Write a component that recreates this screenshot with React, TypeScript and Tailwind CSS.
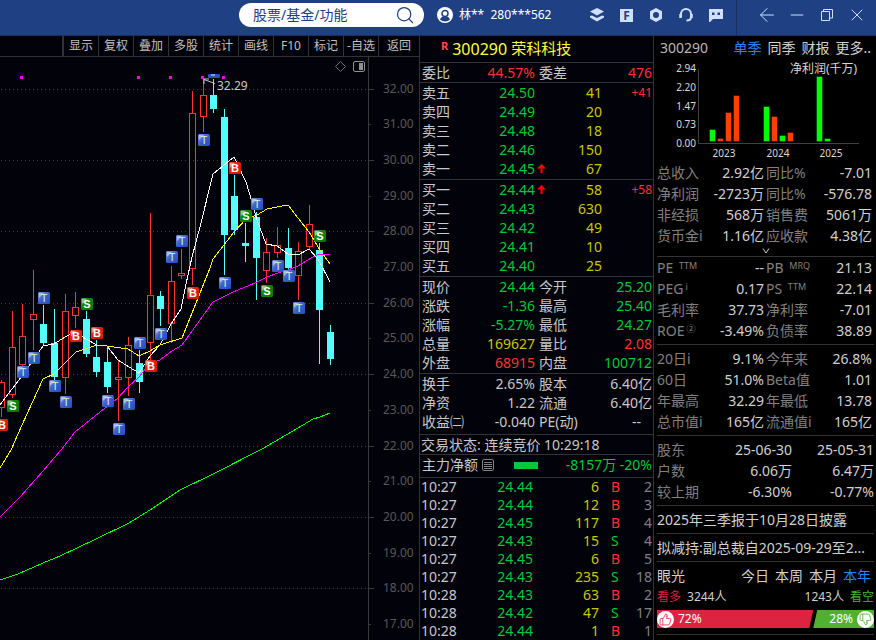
import type { ReactNode } from "react";
import { ArrowLeft, Minus, Search, ThumbsDown, ThumbsUp, X } from "lucide-react";
import clsx from "clsx";

const GREEN = "text-[#00c83c]";
const RED = "text-[#ff3232]";
const YELLOW = "text-[#c8c800]";
const PLAIN = "text-[#c8c8c8]";

// ── Candlestick data: x, high, open/close top, open/close bottom, low (chart units) ──
type Candle = [x: number, high: number, top: number, bottom: number, low: number, up: boolean];

const CANDLES: Candle[] = [
  [1, 380, 382, 407, 417, true],
  [12, 311, 347, 394, 398, true],
  [22, 304, 336, 364, 368, true],
  [33, 270, 314, 319, 350, true],
  [43, 305, 324, 343, 346, false],
  [54, 309, 343, 377, 380, false],
  [65, 294, 311, 377, 394, true],
  [75, 292, 307, 315, 328, true],
  [86, 311, 319, 354, 357, false],
  [96, 340, 357, 372, 377, false],
  [107, 347, 362, 387, 393, false],
  [118, 361, 377, 379, 421, true],
  [128, 337, 345, 377, 396, true],
  [139, 350, 363, 382, 393, false],
  [150, 213, 295, 342, 360, true],
  [160, 291, 296, 309, 326, false],
  [171, 266, 281, 323, 343, true],
  [181, 249, 273, 275, 279, true],
  [192, 91, 113, 268, 285, true],
  [203, 78, 95, 116, 132, true],
  [213, 79, 95, 109, 113, false],
  [224, 109, 117, 235, 275, false],
  [234, 175, 196, 230, 235, false],
  [245, 223, 243, 246, 262, false],
  [256, 212, 217, 258, 300, false],
  [266, 238, 252, 270, 283, true],
  [277, 227, 245, 252, 258, true],
  [288, 228, 248, 268, 270, false],
  [298, 242, 251, 275, 300, true],
  [309, 205, 224, 246, 250, true],
  [319, 243, 250, 310, 364, false],
  [330, 325, 332, 359, 365, false],
];

const AVERAGES = [
  {
    color: "#ffffff",
    points:
      "0,405 12,389 22,376 43,346 54,344 65,337 76,332 86,339 97,345 107,346 118,360 129,367 139,373 150,356 160,345 171,324 181,309 186,284 192,257 200,227 213,174 234,157 246,182 252,202 257,220 266,244 277,246 288,254 298,255 309,249 318,259 330,282",
  },
  {
    color: "#ffff00",
    points:
      "0,468 11,450 22,425 43,379 54,374 76,352 97,345 107,346 128,349 139,356 150,351 160,345 182,338 192,313 210,268 213,259 234,232 247,218 257,215 267,209 277,207 288,205 298,218 309,232 320,250 330,264",
  },
  {
    color: "#ff00ff",
    points:
      "0,517 20,497 43,471 61,450 75,432 100,412 118,398 128,387 139,377 150,363 160,360 172,351 182,345 210,306 213,302 233,292 255,283 267,277 278,273 288,270 298,266 313,257 317,255 330,254",
  },
  {
    color: "#00ff00",
    points: "0,580 18,574 43,563 60,556 96,539 129,523 150,510 180,490 213,474 262,449 298,428 313,419 320,417 330,413",
  },
];

const BADGES: [kind: "T" | "B" | "S", x: number, y: number][] = [
  ["T", 204, 140], ["T", 182, 241], ["T", 172, 257], ["T", 257, 204], ["T", 225, 283],
  ["T", 278, 266], ["T", 289, 276], ["T", 299, 308], ["T", 44, 298], ["T", 23, 372],
  ["T", 34, 358], ["T", 55, 386], ["T", 66, 402], ["T", 108, 401], ["T", 119, 429],
  ["T", 129, 404], ["T", 140, 343], ["T", 161, 334],
  ["B", 235, 168], ["B", 193, 293], ["B", 151, 366], ["B", 76, 336], ["B", 97, 333], ["B", 2, 425],
  ["S", 246, 216], ["S", 267, 291], ["S", 320, 236], ["S", 13, 406], ["S", 87, 304],
];

const PRICES = [32, 31, 30, 29, 28, 27, 26, 25, 24, 23, 22, 21, 20, 19, 18, 17];
const DOTS = [20, 137, 169, 201, 222];

const priceY = (price: number) => Math.floor(89 + (32 - price) * 35.7);

function Badge({ kind, x, y }: { kind: "T" | "B" | "S"; x: number; y: number }) {
  return (
    <g transform={`translate(${x - 6} ${y - 6})`}>
      <rect width="12" height="12" rx="1.5" fill={`url(#badge${kind})`} />
      <path d="M1 1h5L1 6z" fill="#ffffff" opacity="0.45" />
      <text
        x="6"
        y="10"
        textAnchor="middle"
        fontSize="11"
        fontWeight={kind === "T" ? 400 : 700}
        fontFamily="Liberation Sans, sans-serif"
        fill={kind === "T" ? "#d8f0d8" : "#ffffff"}
      >
        {kind}
      </text>
    </g>
  );
}

function CandleChart() {
  return (
    <svg viewBox="0 57 419 583" className="block w-full" role="img" aria-label="K线图">
      <defs>
        <linearGradient id="badgeT" x1="0" y1="0" x2="1" y2="1">
          <stop offset="0" stopColor="#7f9be0" />
          <stop offset="0.5" stopColor="#3a5fc8" />
          <stop offset="1" stopColor="#1e4fd0" />
        </linearGradient>
        <linearGradient id="badgeB" x1="0" y1="0" x2="1" y2="1">
          <stop offset="0" stopColor="#e86050" />
          <stop offset="0.4" stopColor="#e02010" />
          <stop offset="1" stopColor="#d81800" />
        </linearGradient>
        <linearGradient id="badgeS" x1="0" y1="0" x2="1" y2="1">
          <stop offset="0" stopColor="#60a860" />
          <stop offset="0.4" stopColor="#0c840c" />
          <stop offset="1" stopColor="#087808" />
        </linearGradient>
      </defs>

      {/* Grid and price axis */}
      {PRICES.map((price) => {
        const y = priceY(price);
        const major = price % 2 === 0;
        return (
          <g key={price}>
            {major && <path d={`M1 ${y + 0.5}H368`} stroke="#3c3c3c" strokeDasharray="1 3" />}
            <path d={`M368 ${y + 0.5}H${major ? 374 : 371}`} stroke="#3a3a3a" />
            <text x="383" y={y + 4} fontSize="12" fill="#585858">
              {price.toFixed(2)}
            </text>
          </g>
        );
      })}
      <path d="M368.5 57V640" stroke="#3a3a3a" />

      {/* Corner tools */}
      <path d="M340.5 61.5l5 5-5 5-5-5z" fill="none" stroke="#707070" />
      <rect x="353.5" y="61.5" width="11" height="10" rx="1.5" fill="none" stroke="#909090" />
      <rect x="359" y="63" width="4" height="7" fill="#909090" />

      {CANDLES.map(([x, high, top, bottom, low, up]) =>
        up ? (
          <g key={x} stroke="#ff3232" fill="none">
            <path d={`M${x + 0.5} ${high}V${top}M${x + 0.5} ${bottom + 1}V${low}`} />
            <rect x={x - 2.5} y={top + 0.5} width="6" height={bottom - top} />
          </g>
        ) : (
          <g key={x} fill="#54fcfc">
            <rect x={x} y={high} width="1" height={low - high} />
            <rect x={x - 3} y={top} width="7" height={bottom - top} />
          </g>
        ),
      )}

      {AVERAGES.map((line) => (
        <polyline key={line.color} points={line.points} fill="none" stroke={line.color} shapeRendering="crispEdges" />
      ))}

      {BADGES.map(([kind, x, y]) => (
        <Badge key={`${kind}${x}`} kind={kind} x={x} y={y} />
      ))}

      {DOTS.map((x) => (
        <rect key={x} x={x} y="76" width="3" height="3" fill="#ff00ff" />
      ))}

      {/* High mark */}
      <rect x="208" y="74" width="12" height="4" rx="1" fill="#2a55c0" />
      <path d="M211 74h4v2h-4z" fill="#7f9be0" />
      <path d="M215 83.5L204 79.5M204 84v-5h5" fill="none" stroke="#c8c8c8" />
      <text x="217" y="90" fontSize="12" fill="#c8c8c8">
        32.29
      </text>
    </svg>
  );
}

const TOOLS = ["显示", "复权", "叠加", "多股", "统计", "画线", "F10", "标记", "-自选"];

function ChartPanel() {
  return (
    <main className="min-w-0 flex-1">
      <div className="flex h-[21px] justify-end border-b border-[#333] text-xs text-[#c0c0c0]">
        <div className="flex border-l-2 border-[#333]">
          {TOOLS.map((tool) => (
            <button key={tool} className="w-[35px] border-r border-[#333] leading-5 whitespace-nowrap">
              {tool}
            </button>
          ))}
          <button className="w-10 leading-5">返回</button>
        </div>
      </div>
      <CandleChart />
    </main>
  );
}

// ── Quote panel ──
const ASKS = [
  ["卖五", "24.50", "41", "+41"],
  ["卖四", "24.49", "20", ""],
  ["卖三", "24.48", "18", ""],
  ["卖二", "24.46", "150", ""],
  ["卖一", "24.45", "67", ""],
];
const BIDS = [
  ["买一", "24.44", "58", "+58"],
  ["买二", "24.43", "630", ""],
  ["买三", "24.42", "49", ""],
  ["买四", "24.41", "10", ""],
  ["买五", "24.40", "25", ""],
];

type Pair = [label: ReactNode, value: string, tone: string, label2: ReactNode, value2: string, tone2: string];

const SUMMARY: Pair[] = [["委比", "44.57%", RED, "委差", "476", RED]];
const QUOTE: Pair[] = [
  ["现价", "24.44", GREEN, "今开", "25.20", GREEN],
  ["涨跌", "-1.36", GREEN, "最高", "25.40", GREEN],
  ["涨幅", "-5.27%", GREEN, "最低", "24.27", GREEN],
  ["总量", "169627", YELLOW, "量比", "2.08", RED],
  ["外盘", "68915", RED, "内盘", "100712", GREEN],
];
const SHARES: Pair[] = [
  ["换手", "2.65%", PLAIN, "股本", "6.40亿", PLAIN],
  ["净资", "1.22", PLAIN, "流通", "6.40亿", PLAIN],
  ["收益㈡", "-0.040", PLAIN, "PE(动)", "--", PLAIN],
];

const TICKS = [
  ["10:27", "24.44", "6", "B", "2"],
  ["10:27", "24.44", "12", "B", "3"],
  ["10:27", "24.45", "117", "B", "4"],
  ["10:27", "24.43", "15", "S", "4"],
  ["10:27", "24.45", "6", "B", "5"],
  ["10:27", "24.43", "235", "S", "18"],
  ["10:28", "24.43", "63", "B", "2"],
  ["10:28", "24.42", "47", "S", "17"],
  ["10:28", "24.44", "1", "B", "1"],
];

function QuoteTable({ rows }: { rows: Pair[] }) {
  return (
    <table className="w-full table-fixed leading-[19px]">
      <tbody>
        {rows.map(([label, value, tone, label2, value2, tone2]) => (
          <tr key={value + value2}>
            <th className="w-[46px] pl-0.5 text-left font-normal whitespace-nowrap">{label}</th>
            <td className={clsx("w-[69px] text-right", tone)}>{value}</td>
            <th className="w-[50px] pl-1 text-left font-normal whitespace-nowrap">{label2}</th>
            <td className={clsx("text-right", tone2, value2 === "--" ? "pr-3" : "pr-px")}>{value2}</td>
          </tr>
        ))}
      </tbody>
    </table>
  );
}

function OrderTable({ rows }: { rows: string[][] }) {
  return (
    <table className="w-full table-fixed leading-[19px]">
      <tbody>
        {rows.map(([label, price, volume, change]) => (
          <tr key={label}>
            <th className="w-[46px] pl-0.5 text-left font-normal">{label}</th>
            <td className={clsx("w-[69px] text-right", GREEN)}>{price}</td>
            <td className="w-4 pl-0.5">
              {(label === "卖一" || label === "买一") && (
                <svg viewBox="0 0 9 9" className="h-[9px] w-[9px]" aria-label="升">
                  <path d="M4.5 0L9 4.500H5.500V9h-2V4.500H0z" fill="#ff0000" />
                </svg>
              )}
            </td>
            <td className={clsx("w-[51px] text-right", YELLOW)}>{volume}</td>
            <td className={clsx("pr-px text-right text-xs leading-[19px]", RED)}>{change}</td>
          </tr>
        ))}
      </tbody>
    </table>
  );
}

function QuotePanel() {
  return (
    <section className="w-[234px] shrink-0 border-l border-[#333] text-sm text-[#c8c8c8]">
      <h1 className="flex h-[27px] items-center border-b border-[#333] pl-[21px] text-[15px] text-[#ffff40]">
        <span className="mr-1 self-start pt-1 text-[11px] leading-3 font-bold text-[#ff5050]">R</span>
        <span className="text-base">300290</span>
        <span className="ml-1">荣科科技</span>
      </h1>
      <div className="border-b border-[#333]">
        <QuoteTable rows={SUMMARY} />
      </div>
      <div className="border-b border-[#333] pb-px">
        <OrderTable rows={ASKS} />
      </div>
      <div className="border-b border-[#333] pb-px">
        <OrderTable rows={BIDS} />
      </div>
      <div className="border-b border-[#333] pb-px">
        <QuoteTable rows={QUOTE} />
      </div>
      <div className="border-b border-[#333] pb-[3px]">
        <QuoteTable rows={SHARES} />
      </div>
      <p className="border-b border-[#333] pl-px leading-[19px]">交易状态: 连续竞价 10:29:18</p>
      <div className="flex h-[23px] items-center border-b border-[#333] pr-px pb-0.5 pl-0.5">
        主力净额
        <svg viewBox="0 0 12 12" className="ml-1 h-3 w-3" fill="none" stroke="#808080">
          <rect x="0.5" y="0.5" width="11" height="11" rx="1.5" />
          <path d="M2 3.5h8M2 5.5h8M2 7.5h8M2 9.5h8" />
        </svg>
        <span className="ml-5 h-[7px] w-6 bg-[#00c846]" />
        <span className={clsx("ml-auto", GREEN)}>-8157万 -20%</span>
      </div>
      <table className="w-full table-fixed leading-[18px]">
        <tbody>
          {TICKS.map(([time, price, volume, side, count], i) => (
            <tr key={i}>
              <td className="w-[46px] pl-px">{time}</td>
              <td className={clsx("w-[67px] text-right", GREEN)}>{price}</td>
              <td className={clsx("w-[66px] text-right", YELLOW)}>{volume}</td>
              <td className={clsx("pl-3", side === "B" ? RED : GREEN)}>{side}</td>
              <td className="pr-px text-right text-[#808080]">{count}</td>
            </tr>
          ))}
        </tbody>
      </table>
    </section>
  );
}

// ── Finance panel ──
type Metric = [label: ReactNode, value: string, label2: ReactNode, value2: string];

const EARNINGS: Metric[] = [
  ["总收入", "2.92亿", "同比%", "-7.01"],
  ["净利润", "-2723万", "同比%", "-576.78"],
  ["非经损", "568万", "销售费", "5061万"],
  ["货币金i", "1.16亿", "应收款", "4.38亿"],
];
const RATIOS: Metric[] = [
  [<>PE <Sup>TTM</Sup></>, "--", <>PB <Sup>MRQ</Sup></>, "21.13"],
  [<>PEG<Sup>i</Sup></>, "0.17", <>PS <Sup>TTM</Sup></>, "22.14"],
  ["毛利率", "37.73", "净利率", "-7.01"],
  [<>ROE<Sup>②</Sup></>, "-3.49%", "负债率", "38.89"],
];
const RETURNS: Metric[] = [
  ["20日i", "9.1%", "今年来", "26.8%"],
  ["60日", "51.0%", "Beta值", "1.01"],
  ["年最高", "32.29", "年最低", "13.78"],
  ["总市值i", "165亿", "流通值i", "165亿"],
];
const HOLDERS = [
  ["股东", "25-06-30", "25-05-31"],
  ["户数", "6.06万", "6.47万"],
  ["较上期", "-6.30%", "-0.77%"],
];

// x, top, colour
const BARS: [number, number, string][] = [
  [709, 129, "#00ff00"], [717, 138, "#ff4000"], [725, 112, "#ff4000"], [733, 95, "#ff4000"],
  [763, 106, "#00ff00"], [771, 116, "#ff4000"], [779, 135, "#00ff00"], [787, 132, "#ff4000"],
  [816, 76, "#00ff00"], [824, 138, "#00ff00"],
];

function Sup({ children }: { children: ReactNode }) {
  return <sup className="top-[-4px] ml-0.5 text-[9px]">{children}</sup>;
}

function MetricTable({ rows }: { rows: Metric[] }) {
  return (
    <table className="w-full table-fixed leading-[21px]">
      <tbody>
        {rows.map(([label, value, label2, value2], i) => (
          <tr key={i}>
            <th className="w-[54px] text-left font-normal whitespace-nowrap text-[#808080]">{label}</th>
            <td className="w-[53px] text-right whitespace-nowrap">{value}</td>
            <th className="w-[54px] pl-0.5 text-left font-normal whitespace-nowrap text-[#808080]">{label2}</th>
            <td className="pr-0.5 text-right whitespace-nowrap">{value2}</td>
          </tr>
        ))}
      </tbody>
    </table>
  );
}

function ProfitChart() {
  return (
    <svg viewBox="657 59 217 103" className="block w-full" role="img" aria-label="净利润(千万)" fill="#d8d8d8" fontSize="10">
      {["2.94", "2.20", "1.47", "0.73", "0.00"].map((label, i) => (
        <text key={label} x="696" y={Math.round(72 + i * 18.75)} textAnchor="end">
          {label}
        </text>
      ))}
      <path d="M698.5 69V143.5H859" fill="none" stroke="#404040" />
      {BARS.map(([x, top, color]) => (
        <rect key={x} x={x + 0.5} y={top + 0.5} width="6" height={141 - top} fill={color} stroke="#000000" strokeOpacity="0.4" />
      ))}
      <text x="724" y="157" textAnchor="middle">2023</text>
      <text x="778" y="157" textAnchor="middle">2024</text>
      <text x="831" y="157" textAnchor="middle">2025</text>
      <text x="790" y="73" fontSize="12">净利润(千万)</text>
    </svg>
  );
}

function FinancePanel() {
  return (
    <aside className="w-[223px] shrink-0 border-l border-[#333] bg-black pr-0.5 pl-[3px] text-sm text-[#d0d0d0]">
      <div className="flex h-[23px] items-center justify-between pr-[3px] pl-[3px]">
        <span className="text-[#b8b8b8]">300290</span>
        <nav className="flex gap-1.5">
          <button className="text-[#3080ff]">单季</button>
          <button>同季</button>
          <button>财报</button>
          <button>更多..</button>
        </nav>
      </div>
      <ProfitChart />
      <MetricTable rows={EARNINGS} />
      <button className="mx-auto flex h-2.5 w-8 items-center justify-center" aria-label="展开">
        <svg viewBox="0 0 8 6" className="h-1.5 w-2" fill="none" stroke="#d0d0d0">
          <path d="M1 0.5L4 5L7 0.5" />
        </svg>
      </button>
      <div className="border-y border-[#333] pb-[3px]">
        <MetricTable rows={RATIOS} />
      </div>
      <div className="border-b border-[#333] py-[3px]">
        <MetricTable rows={RETURNS} />
      </div>
      <div className="border-b border-[#333] py-[3px]">
        <table className="w-full table-fixed leading-[21px]">
          <tbody>
            {HOLDERS.map(([label, current, previous]) => (
              <tr key={label}>
                <th className="w-[54px] text-left font-normal text-[#808080]">{label}</th>
                <td className="w-[81px] text-right">{current}</td>
                <td className="text-right">{previous}</td>
              </tr>
            ))}
          </tbody>
        </table>
      </div>
      <a href="#report" className="block border-b border-[#333] leading-[27px] whitespace-nowrap">
        2025年三季报于10月28日披露
      </a>
      <a href="#holdings" className="block border-b border-[#333] leading-[27px] whitespace-nowrap">
        拟减持:副总裁自2025-09-29至2...
      </a>
      <div className="flex h-[27px] items-center justify-between pr-[3px]">
        <span>眼光</span>
        <nav className="flex gap-1.5">
          <button>今日</button>
          <button>本周</button>
          <button>本月</button>
          <button className="text-[#3080ff]">本年</button>
        </nav>
      </div>
      <div className="flex h-[21px] justify-between text-xs leading-[16px]">
        <span>
          <span className="mr-1.5 text-[#dc2440]">看多</span>3244人
        </span>
        <span>
          1243人<span className="ml-1.5 text-[#50b030]">看空</span>
        </span>
      </div>
      <div className="flex h-[18px] text-xs leading-[18px] text-white">
        <button className="flex flex-[72] items-center gap-1 bg-[#dc2440] [clip-path:polygon(0_0,100%_0,calc(100%-4px)_100%,0_100%)]">
          <span className="flex h-[17px] w-[17px] items-center justify-center rounded-full bg-white text-[#dc2440]">
            <ThumbsUp size={13} strokeWidth={1.5} />
          </span>
          72%
        </button>
        <button className="flex flex-[28] items-center justify-end gap-1 bg-[#50b030] [clip-path:polygon(4px_0,100%_0,100%_100%,0_100%)]">
          28%
          <span className="flex h-[17px] w-[17px] items-center justify-center rounded-full bg-white text-[#50b030]">
            <ThumbsDown size={13} strokeWidth={1.5} className="-scale-x-100" />
          </span>
        </button>
      </div>
      <div className="mt-1.5 border-b border-[#333]" />
    </aside>
  );
}

function TitleBar() {
  return (
    <header className="flex h-9 justify-end border-b border-[#16305f] bg-[#1f4082] pb-[5px] text-[#cfe0ff]">
      <label className="mt-[3px] flex h-6 w-[185px] items-center rounded-full bg-white pr-[9px] pl-3.5 text-[#1f4082]">
        <input
          type="text"
          aria-label="搜索"
          placeholder="股票/基金/功能"
          className="w-0 flex-1 text-sm outline-none placeholder:text-[#1f4082]"
        />
        <Search size={20} strokeWidth={1.5} />
      </label>
      <button className="ml-[13px] flex w-[141px] items-center text-xs text-white">
        <svg viewBox="0 0 16 16" className="mr-1.5 h-4 w-4">
          <circle cx="8" cy="8" r="8" fill="#ffffff" />
          <circle cx="8" cy="6.500" r="3" fill="none" stroke="#1f4082" strokeWidth="1.5" />
          <path d="M3 12.500c1-2.500 2.500-3 5-3s4 0.500 5 3c-2.500 2.500-7.500 2.500-10 0z" fill="#1f4082" />
        </svg>
        林**&nbsp; 280***562
      </button>
      <div className="flex items-center gap-4 pr-[13px] pl-3">
        <button aria-label="图层">
          <svg viewBox="0 0 14 14" className="h-3.5 w-3.5" fill="currentColor">
            <path d="M7 0l7 3.500L7 7.500 0 3.500z" />
            <path d="M0 8l2-0.500 5 2.500 5-2.500 2 0.500v1.500L7 13.500 0 9.500z" />
          </svg>
        </button>
        <button aria-label="F" className="h-[13px] w-[13px] bg-[#cfe0ff] text-center text-xs leading-[13px] font-bold text-[#1f4082]">
          F
        </button>
        <button aria-label="设置">
          <svg viewBox="0 0 14 14" className="h-3.5 w-3.5" fill="currentColor" fillRule="evenodd">
            <path d="M7 0l6 3.300v7.400L7 14l-6-3.300V3.300zM7 4a3 3 0 100 6 3 3 0 000-6z" />
          </svg>
        </button>
        <button aria-label="客服">
          <svg viewBox="0 0 14 14" className="h-3.5 w-3.5" fill="none" stroke="currentColor" strokeWidth="2">
            <path d="M2 9V6a5 5 0 0110 0v3c0 2-1.500 3.500-4.500 3.500" />
            <path d="M1.500 6v4M12.500 6v4" strokeWidth="2.500" />
          </svg>
        </button>
        <button aria-label="消息">
          <svg viewBox="0 0 14 13" className="h-[13px] w-3.5" fill="currentColor" fillRule="evenodd">
            <path d="M0 0h14v10H4l-3 3H0zM3 3.500v2.500h2.500V3.500zM8.500 3.500v2.500H11V3.500z" />
          </svg>
        </button>
      </div>
      <div className="-mb-[5px] flex items-center border-l border-[#16305f] pr-1 pb-[5px] pl-[15px]">
        <button aria-label="后退" className="flex w-[30px] justify-center">
          <ArrowLeft size={22} strokeWidth={1} absoluteStrokeWidth />
        </button>
        <button aria-label="最小化" className="flex w-[30px] justify-center">
          <Minus size={20} strokeWidth={1} absoluteStrokeWidth />
        </button>
        <button aria-label="还原" className="flex w-[30px] justify-center">
          <svg viewBox="0 0 12 12" className="h-3 w-3" fill="none" stroke="currentColor">
            <path d="M0.500 2.500h8v9h-8zM2.500 2.500v-2h9v8.500H8.500" />
          </svg>
        </button>
        <button aria-label="关闭" className="flex w-[30px] justify-center">
          <X size={20} strokeWidth={1} absoluteStrokeWidth />
        </button>
      </div>
    </header>
  );
}

export default function App() {
  return (
    <div className="flex min-h-screen flex-col bg-[#02020a] font-['Noto_Sans','Noto_Sans_CJK_SC',sans-serif]">
      <TitleBar />
      <div className="flex flex-1">
        <ChartPanel />
        <QuotePanel />
        <FinancePanel />
      </div>
    </div>
  );
}
